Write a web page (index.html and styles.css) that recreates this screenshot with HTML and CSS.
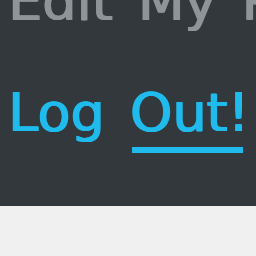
FILE: index.html
```html
<!DOCTYPE html>
<html lang="en">
<head>
  <meta charset="UTF-8" />
  <meta name="viewport" content="width=device-width, initial-scale=1" />
  <title>Account</title>
  <link rel="stylesheet" href="styles.css">
</head>
<body>
  <div class="panel">
    <ul class="menu">
      <li><a href="#" class="edit-link">Edit My Profile</a></li>
      <li><a href="#" class="logout-link">Log <span class="current">Out!</span></a></li>
    </ul>
  </div>
</body>
</html>
```

FILE: styles.css
```css
html, body {
  margin: 0;
  padding: 0;
  background: #f0f0f0;
  font-family: "DejaVu Sans", Verdana, sans-serif;
  overflow: hidden;
}
.panel {
  background: #33383c;
  padding: 0 8px 66px;
  box-shadow: 0 3px 12px rgba(0,0,0,.22);
  overflow: hidden;
}
.menu {
  list-style: none;
  margin: -25px 0 0;
  padding: 0;
  display: flex;
  flex-direction: column;
  gap: 57px;
  white-space: nowrap;
}
.menu li {
  font-size: 54px;
  line-height: 54px;
  word-spacing: 8px;
}
.menu a {
  text-decoration: none;
  /* fake a slightly heavier weight */
  text-shadow: 1px 0 0 currentColor, -.5px 0 0 currentColor;
}
.edit-link {
  color: #8f9499;
}
.logout-link {
  color: #1fbbec;
}
.current {
  position: relative;
}
.current::after {
  content: "";
  position: absolute;
  left: 2px;
  right: 6px;
  bottom: -9px;
  height: 6px;
  background: #1fbbec;
}
```
